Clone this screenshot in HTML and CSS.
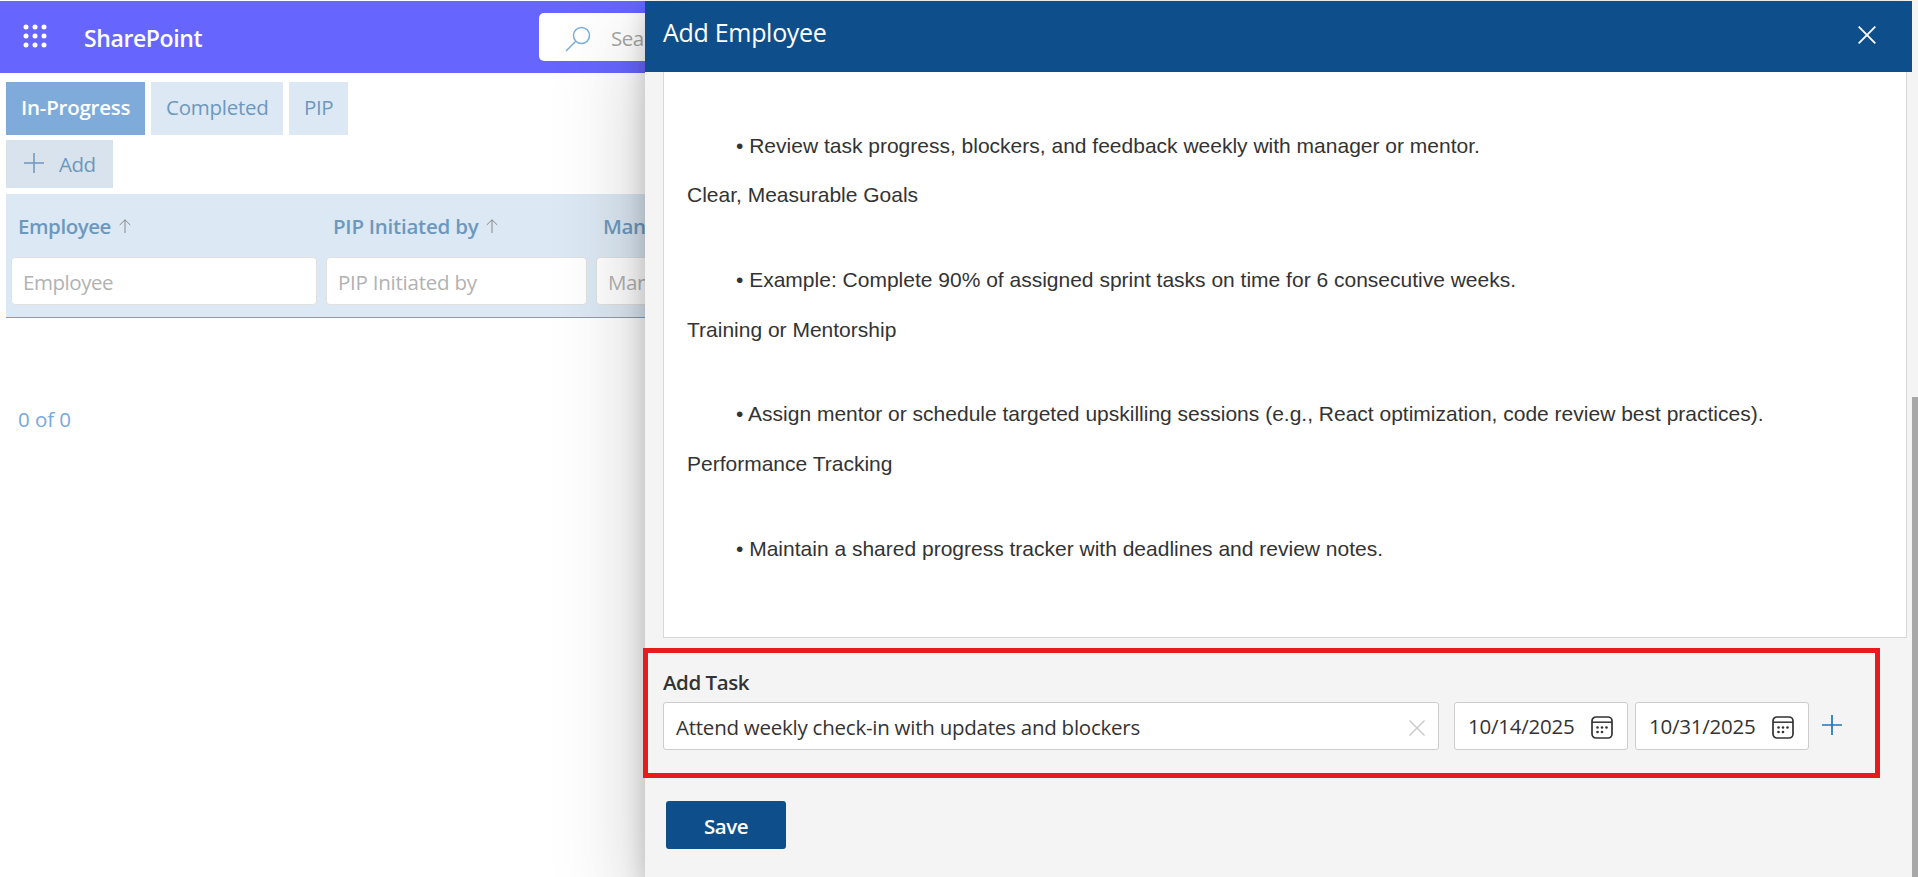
FILE: index.html
```html
<!DOCTYPE html>
<html lang="en">
<head>
<meta charset="utf-8">
<title>Add Employee</title>
<link rel="stylesheet" href="styles.css">
</head>
<body>
<div class="page">
  <header class="suite">
    <svg class="waffle" width="24" height="24" viewBox="0 0 24 24" fill="#fff"><circle cx="3" cy="3" r="2.5"/><circle cx="12" cy="3" r="2.5"/><circle cx="21" cy="3" r="2.5"/><circle cx="3" cy="12" r="2.5"/><circle cx="12" cy="12" r="2.5"/><circle cx="21" cy="12" r="2.5"/><circle cx="3" cy="21" r="2.5"/><circle cx="12" cy="21" r="2.5"/><circle cx="21" cy="21" r="2.5"/></svg>
    <span class="brand">SharePoint</span>
    <div class="search">
      <svg width="26" height="26" viewBox="0 0 26 26" fill="none" stroke="#7aaede" stroke-width="1.5"><circle cx="16.5" cy="9.5" r="8"/><path d="M10.8 15.2L1 25"/></svg>
      <span class="search-text">Sea</span>
    </div>
  </header>
  <nav class="tabs">
    <span class="tab tab-active"><span class="t-prog">In-Progress</span></span>
    <span class="tab tab-mid"><span class="t-comp">Completed</span></span>
    <span class="tab tab-pip"><span class="t-pip">PIP</span></span>
  </nav>
  <div class="add">
    <svg width="20" height="20" viewBox="0 0 20 20" stroke="#6d98be" stroke-width="1.5"><path d="M0 10H20M10 0V20"/></svg>
    <span class="t-add">Add</span>
  </div>
  <section class="grid">
    <div class="col col-1">
      <div class="head"><span class="h-emp">Employee</span><svg class="arrow" width="12" height="14" viewBox="0 0 12 14" fill="none" stroke="#888"><path d="M6 .7V14M.7 6L6 .8L11.3 6"/></svg></div>
      <div class="filter"><span class="p-emp">Employee</span></div>
    </div>
    <div class="col col-2">
      <div class="head"><span class="h-pip">PIP Initiated by</span><svg class="arrow" width="12" height="14" viewBox="0 0 12 14" fill="none" stroke="#888"><path d="M6 .7V14M.7 6L6 .8L11.3 6"/></svg></div>
      <div class="filter"><span class="p-pip">PIP Initiated by</span></div>
    </div>
    <div class="col col-3">
      <div class="head"><span class="h-man">Man</span></div>
      <div class="filter"><span class="p-man">Man</span></div>
    </div>
  </section>
  <div class="count">0 of 0</div>
</div>

<aside class="panel">
  <div class="panel-main">
    <header class="panel-head">
      <span class="panel-title">Add Employee</span>
      <svg class="close" width="18" height="18" viewBox="0 0 18 18" stroke="#fff" stroke-width="1.8"><path d="M.7 .7L17.3 17.3M17.3 .7L.7 17.3"/></svg>
    </header>
    <div class="editor">
      <p class="item">• Review task progress, blockers, and feedback weekly with manager or mentor.</p>
      <p class="topic">Clear, Measurable Goals</p>
      <p class="item">• Example: Complete 90% of assigned sprint tasks on time for 6 consecutive weeks.</p>
      <p class="topic">Training or Mentorship</p>
      <p class="item">• Assign mentor or schedule targeted upskilling sessions (e.g., React optimization, code review best practices).</p>
      <p class="topic">Performance Tracking</p>
      <p class="item">• Maintain a shared progress tracker with deadlines and review notes.</p>
    </div>
    <section class="task">
      <div class="label"><span class="t-task">Add Task</span></div>
      <div class="row">
        <div class="field name"><span class="t-name">Attend weekly check-in with updates and blockers</span>
          <svg class="clear" width="16" height="16" viewBox="0 0 16 16" stroke="#c6c6c6" stroke-width="1.3"><path d="M.5 .5L15.5 15.5M15.5 .5L.5 15.5"/></svg></div>
        <div class="field date"><span class="t-date">10/14/2025</span>
          <svg class="cal" width="22" height="23" viewBox="0 0 22 23"><rect x="1" y="1" width="20" height="21" rx="4" fill="none" stroke="#333" stroke-width="1.7"/><path d="M1 6.2H21" stroke="#333" stroke-width="1.5"/><g fill="#333"><circle cx="6.5" cy="11.5" r="1.3"/><circle cx="11" cy="11.5" r="1.3"/><circle cx="15.5" cy="11.5" r="1.3"/><circle cx="6.5" cy="16" r="1.3"/><circle cx="11" cy="16" r="1.3"/></g></svg></div>
        <div class="field date date-2"><span class="t-date">10/31/2025</span>
          <svg class="cal" width="22" height="23" viewBox="0 0 22 23"><rect x="1" y="1" width="20" height="21" rx="4" fill="none" stroke="#333" stroke-width="1.7"/><path d="M1 6.2H21" stroke="#333" stroke-width="1.5"/><g fill="#333"><circle cx="6.5" cy="11.5" r="1.3"/><circle cx="11" cy="11.5" r="1.3"/><circle cx="15.5" cy="11.5" r="1.3"/><circle cx="6.5" cy="16" r="1.3"/><circle cx="11" cy="16" r="1.3"/></g></svg></div>
        <svg class="plus" width="20" height="20" viewBox="0 0 20 20" stroke="#1f74bf" stroke-width="1.7"><path d="M0 10H20M10 0V20"/></svg>
      </div>
    </section>
    <button class="save"><span class="t-save">Save</span></button>
  </div>
  <div class="scroll"><div class="thumb"></div></div>
</aside>
</body>
</html>
```
FILE: styles.css
```css
* { box-sizing: border-box; }
body {
  margin: 0;
  height: 877px;
  overflow: hidden;
  position: relative;
  background: #fff;
  font-family: "Open Sans", "Noto Sans", sans-serif;
  font-size: 20.5px;
  line-height: 28px;
  white-space: nowrap;
}
.page { padding-top: 1px; width: 900px; }
.suite { height: 72px; background: #66f; display: flex; align-items: flex-start; }
.waffle { margin: 23px 0 0 23px; }
.brand { width: 118px; margin: 22px 0 0 37px; color: #fff; font-size: 23px; font-weight: 600; letter-spacing: -.4px; line-height: 30px; }
.search { width: 361px; height: 48px; margin: 12px 0 0 337px; border-radius: 5px; background: #fff; display: flex; padding: 13px 0 0 26px; }
.search-text { margin: -2px 0 0 20px; color: #a6a6a6; letter-spacing: -.5px; }
.tabs { display: flex; gap: 6px; padding: 9px 0 0 6px; }
.tab { height: 53px; padding: 11px 0 0 15px; background: #dce8f3; color: #6d98be; }
.tab-active { width: 139px; background: #7eabd9; color: #fff; font-weight: 600; }
.tab-mid { width: 132px; }
.tab-pip { width: 59px; }
.add { width: 107px; height: 48px; margin: 5px 0 0 6px; padding: 10px 0 0 18px; background: #d8e3ee; color: #6d98be; display: flex; }
.add svg { margin-top: 3px; }
.t-add { margin-left: 15px; }
.grid { height: 124px; margin: 6px 0 0 6px; padding: 0 0 0 5px; background: #dce8f3; border-bottom: 1px solid #6fa6d6; display: flex; gap: 9px; }
.col-1 { width: 306px; }
.col-2 { width: 261px; }
.col-3 { width: 262px; }
.head { height: 63px; padding: 18px 0 0 7px; color: #6d98be; font-weight: 600; display: flex; }
.arrow { margin: 7px 0 0 8px; }
.filter { height: 48px; padding: 10px 0 0 11px; background: #fff; border: 1px solid #e1e1e1; border-radius: 4px; color: #b2b2b2; }
.count { margin: 87px 0 0 18px; color: #76a9dc; }

.panel { position: absolute; left: 645px; top: 1px; width: 1273px; height: 876px; background: #f4f4f4; display: flex; box-shadow: 0 38px 86px rgba(0, 0, 0, .22), 0 7px 22px rgba(0, 0, 0, .18); }
.panel-main { width: 1267px; }
.panel-head { height: 71px; padding: 14px 36px 0 18px; background: #0e4f8b; color: #fff; font-size: 25px; line-height: 34px; display: flex; justify-content: space-between; }
.close { margin-top: 11px; }
.editor { width: 1244px; height: 566px; margin-left: 18px; padding: 61.7px 0 0 23px; background: #fff; border: 1px solid #d8d8d8; border-top: 0; color: #333; font: 21px/24px "Liberation Sans", Arial, sans-serif; }
.editor p { margin: 0; }
.editor .item { padding-left: 49px; height: 49.7px; }
.editor .topic { height: 84.6px; }
.task { width: 1237px; height: 130px; margin: 10px 0 0 -2px; padding: 16px 0 0 15px; border: 5px solid #e81a1c; color: #333; }
.label { height: 33px; line-height: 27px; font-weight: 600; }
.row { display: flex; }
.field { height: 48px; background: #fff; border: 1px solid #cdcdcd; border-radius: 3px; display: flex; justify-content: space-between; padding: 9px 13px 0 12px; }
.name { width: 776px; }
.name .t-name { padding-top: 1px; }
.clear { margin-top: 8px; }
.date { width: 174px; margin-left: 15px; padding-right: 14px; padding-left: 13px; }
.date-2 { margin-left: 7px; }
.cal { margin-top: 4px; }
.plus { margin: 13px 0 0 13px; }
.save { display: block; width: 120px; height: 48px; margin: 23px 0 0 21px; padding: 1px 0 0; border: 0; border-radius: 3px; background: #0e4f8b; color: #fff; font: 600 20.5px/48px "Open Sans", sans-serif; }
.scroll { width: 6px; padding-top: 396px; }
.thumb { height: 480px; background: #a8a8a8; }
.t-pip, .t-add, .h-emp, .h-man, .p-emp, .p-man, .t-task, .t-save { letter-spacing: -.45px; }
.t-prog, .t-comp, .h-pip, .t-name, .t-date, .p-pip { letter-spacing: -.24px; }
.panel-title { letter-spacing: -.3px; }
.count { letter-spacing: -.05px; }
```
